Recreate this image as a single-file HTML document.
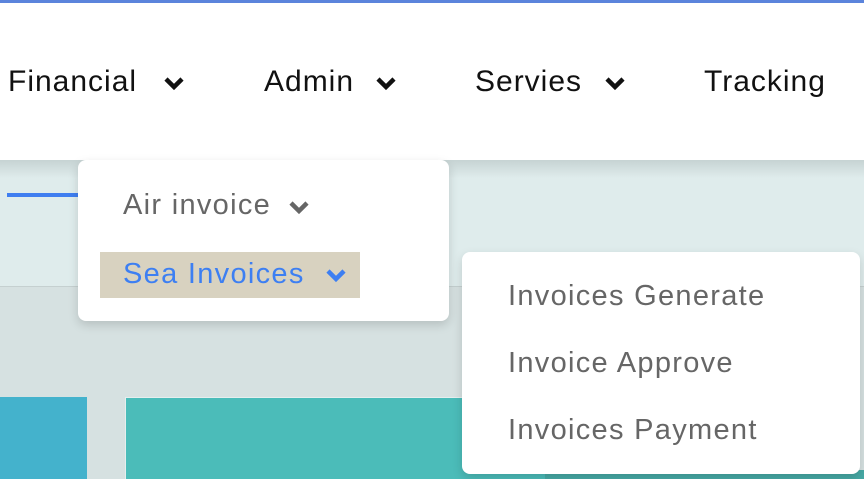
<!DOCTYPE html>
<html><head><style>
*{margin:0;padding:0;box-sizing:border-box}
body{width:864px;height:479px;overflow:hidden;position:relative;background:#d6e1e1;font-family:"Liberation Sans",sans-serif}
.abs{position:absolute}
.nav{left:0;top:0;width:864px;height:160px;background:#fff;border-top:3px solid #5b84dc}
.nav span{position:absolute;top:62px;font-size:30px;color:#111;letter-spacing:1px}
.chev{position:absolute}
.band{left:0;top:160px;width:864px;height:127px;background:linear-gradient(#c6d3d3,#dfecec 18px,#dfecec);border-bottom:1px solid #c5d0d0}
.m{background:#fff;border-radius:8px;box-shadow:0 4px 10px rgba(0,0,0,.15)}
.it{position:absolute;font-size:29px;color:#666;white-space:nowrap;letter-spacing:1.3px}
</style></head><body>
<div class="abs band"></div>
<div class="abs" style="left:7px;top:193px;width:72px;height:4px;background:#3f7ef0"></div>
<div class="abs" style="left:0;top:397px;width:87px;height:82px;background:#44b2cc"></div>
<div class="abs" style="left:125px;top:397px;width:420px;height:82px;background:#4bbcb9;border-top:1px solid #e6eeee;border-left:1px solid #e6eeee"></div>
<div class="abs" style="left:545px;top:470px;width:319px;height:9px;background:#46a9a5"></div>
<div class="abs nav">
<span style="left:8px">Financial</span>
<svg class="chev" style="left:163px;top:72px" width="22" height="16" viewBox="0 0 22 16"><path d="M3 4l8 8 8-8" stroke="#111" stroke-width="4.5" fill="none"/></svg>
<span style="left:264px">Admin</span>
<svg class="chev" style="left:375px;top:72px" width="22" height="16" viewBox="0 0 22 16"><path d="M3 4l8 8 8-8" stroke="#111" stroke-width="4.5" fill="none"/></svg>
<span style="left:475px">Servies</span>
<svg class="chev" style="left:604px;top:72px" width="22" height="16" viewBox="0 0 22 16"><path d="M3 4l8 8 8-8" stroke="#111" stroke-width="4.5" fill="none"/></svg>
<span style="left:704px">Tracking</span>
</div>
<div class="abs m" style="left:78px;top:160px;width:371px;height:161px">
<div class="it" style="left:45px;top:29px">Air invoice</div>
<svg class="chev" style="left:210px;top:39px" width="22" height="16" viewBox="0 0 22 16"><path d="M3 4l8 8 8-8" stroke="#666" stroke-width="4.5" fill="none"/></svg>
<div class="abs" style="left:22px;top:92px;width:260px;height:46px;background:#d8d2c0"></div>
<div class="it" style="left:45px;top:98px;color:#3d7ff2">Sea Invoices</div>
<svg class="chev" style="left:247px;top:107px" width="22" height="16" viewBox="0 0 22 16"><path d="M3 4l8 8 8-8" stroke="#3d7ff2" stroke-width="4.5" fill="none"/></svg>
</div>
<div class="abs m" style="left:462px;top:252px;width:398px;height:222px">
<div class="it" style="left:46px;top:28px">Invoices Generate</div>
<div class="it" style="left:46px;top:95px">Invoice Approve</div>
<div class="it" style="left:46px;top:162px">Invoices Payment</div>
</div>
</body></html>
